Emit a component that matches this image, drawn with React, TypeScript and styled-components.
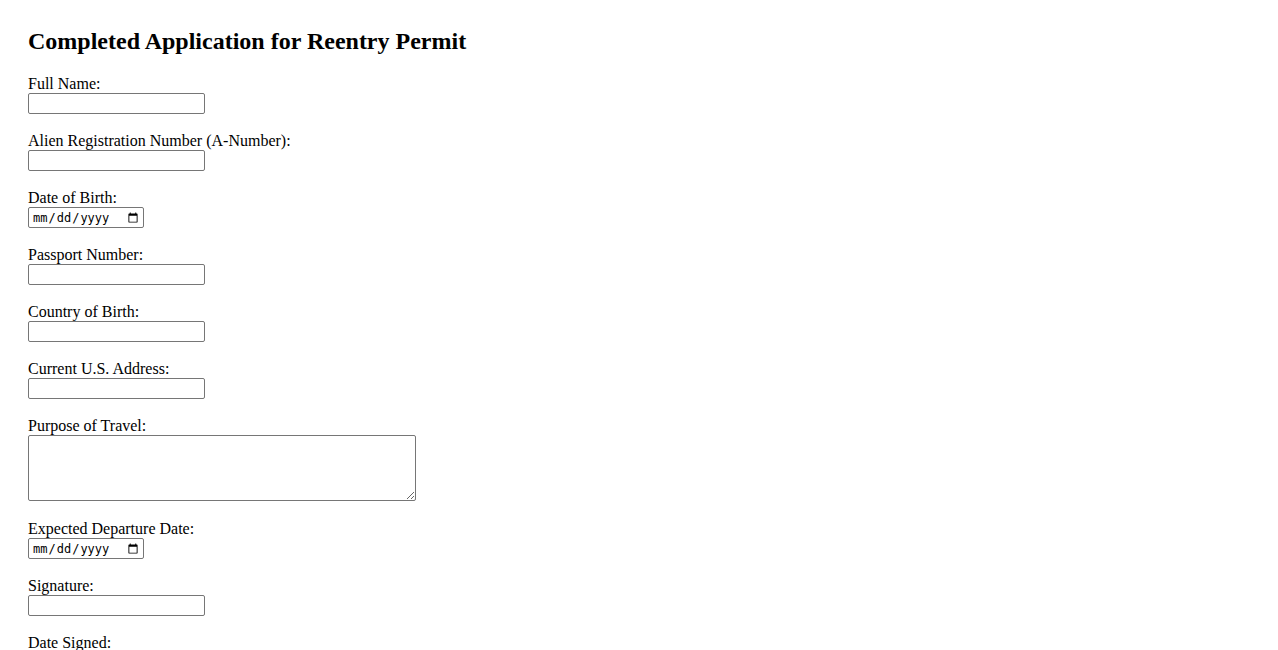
import React from "react";
import styled, { createGlobalStyle } from "styled-components";

const GlobalStyle = createGlobalStyle`
  html, body {
    margin: 0;
    padding: 0;
    background: #ffffff;
  }
  body {
    font-family: "Liberation Serif", "Times New Roman", serif;
    font-size: 16px;
    color: #000000;
  }
`;

const Page = styled.div`
  padding: 27px 28px 0 28px;
`;

const Title = styled.h2`
  margin: 0 0 20px 0;
  font-family: "Liberation Serif", "Times New Roman", serif;
  font-size: 24px;
  font-weight: bold;
  line-height: 28px;
`;

const Form = styled.form`
  display: flex;
  flex-direction: column;
  gap: 18px;
`;

const Field = styled.div<{ $extra?: number }>`
  display: flex;
  flex-direction: column;
  align-items: flex-start;
  margin-bottom: ${(p) => p.$extra ?? 0}px;
`;

const Label = styled.label`
  display: block;
  height: 18px;
  line-height: 18px;
  font-size: 16px;
  white-space: nowrap;
`;

const TextInput = styled.input`
  box-sizing: border-box;
  width: 177px;
  height: 21px;
  margin: 0;
  padding: 1px 2px;
  border: 1px solid #767676;
  border-radius: 2px;
  background: #ffffff;
  font-family: "Liberation Sans", Arial, sans-serif;
  font-size: 13px;
`;

const DateInput = styled.input`
  box-sizing: border-box;
  width: 116px;
  height: 21px;
  margin: 0;
  padding: 1px 2px 1px 3px;
  border: 1px solid #767676;
  border-radius: 2px;
  background: #ffffff;
  font-family: "DejaVu Sans Mono", "Liberation Mono", monospace;
  font-size: 12px;
  color: #000000;
`;

const TextArea = styled.textarea`
  box-sizing: border-box;
  width: 388px;
  height: 66px;
  margin: 0;
  padding: 2px;
  border: 1px solid #767676;
  border-radius: 2px;
  background: #ffffff;
  font-family: "DejaVu Sans Mono", "Liberation Mono", monospace;
  font-size: 13px;
`;

type FieldDef = { id: string; label: string; kind: "text" | "date" | "area" };

const fields: FieldDef[] = [
  { id: "fullName", label: "Full Name:", kind: "text" },
  { id: "aNumber", label: "Alien Registration Number (A-Number):", kind: "text" },
  { id: "dob", label: "Date of Birth:", kind: "date" },
  { id: "passport", label: "Passport Number:", kind: "text" },
  { id: "country", label: "Country of Birth:", kind: "text" },
  { id: "address", label: "Current U.S. Address:", kind: "text" },
  { id: "purpose", label: "Purpose of Travel:", kind: "area" },
  { id: "departure", label: "Expected Departure Date:", kind: "date" },
  { id: "signature", label: "Signature:", kind: "text" },
  { id: "dateSigned", label: "Date Signed:", kind: "date" },
];

export default function App() {
  return (
    <>
      <GlobalStyle />
      <Page>
        <Title>Completed Application for Reentry Permit</Title>
        <Form onSubmit={(e) => e.preventDefault()}>
          {fields.map((f) => (
            <Field key={f.id} $extra={f.kind === "area" ? 1 : 0}>
              <Label htmlFor={f.id}>{f.label}</Label>
              {f.kind === "text" && <TextInput id={f.id} type="text" />}
              {f.kind === "date" && <DateInput id={f.id} type="date" />}
              {f.kind === "area" && <TextArea id={f.id} />}
            </Field>
          ))}
        </Form>
      </Page>
    </>
  );
}
